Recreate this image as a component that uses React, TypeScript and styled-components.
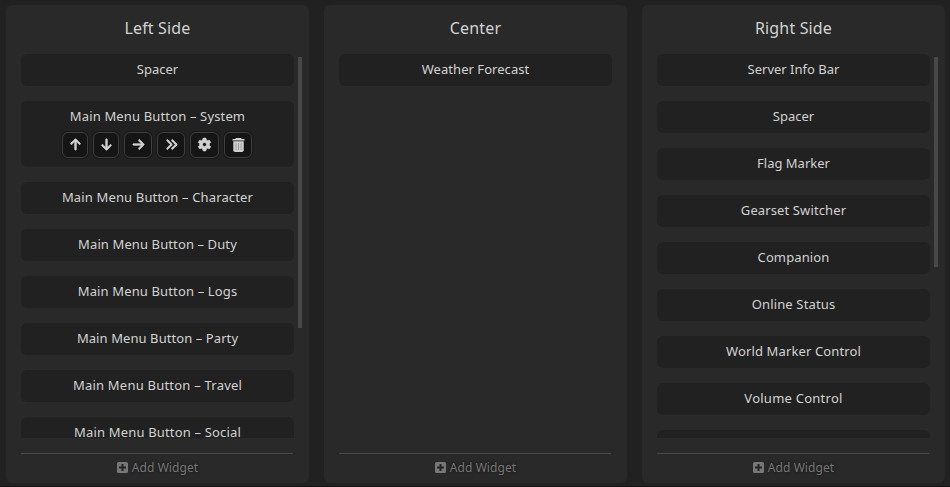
import React from "react";
import styled, { createGlobalStyle } from "styled-components";
import { FaArrowUp, FaArrowDown, FaArrowRight, FaAnglesRight, FaGear } from "react-icons/fa6";

const GlobalStyle = createGlobalStyle`
  * { box-sizing: border-box; }
  body {
    margin: 0;
    background: #212121;
    color: #d2d2d2;
    font-family: "Noto Sans", "Open Sans", sans-serif;
    overflow: hidden;
  }
`;

const Board = styled.main`
  display: grid;
  grid-template-columns: repeat(3, 303px);
  column-gap: 15px;
  height: 487px;
  padding: 5px 5px 3px 6px;
  border-bottom: 1px solid #151515;
`;

const Panel = styled.section`
  display: flex;
  flex-direction: column;
  height: 478px;
  padding: 0 0 0 15px;
  border-radius: 6px;
  background: #292929;
`;

const Title = styled.h2`
  margin: 0 15px 0 0;
  height: 49px;
  line-height: 46px;
  font-size: 16px;
  font-weight: 400;
  text-align: center;
  letter-spacing: 0.15px;
`;

const ListArea = styled.div`
  display: flex;
  height: 384px;
  overflow: hidden;
`;

const List = styled.div`
  display: flex;
  flex-direction: column;
  gap: 15px;
  width: 273px;
`;

const Scrollbar = styled.div<{ $length: number }>`
  width: 4px;
  height: ${(p) => p.$length}px;
  margin: 3px 0 0 4px;
  background: #484848;
`;

const Card = styled.div<{ $open?: boolean }>`
  flex: none;
  height: ${(p) => (p.$open ? 66 : 32)}px;
  border-radius: 6px;
  background: #212121;
`;

const Label = styled.div<{ $spacing?: number }>`
  height: 31px;
  line-height: 31px;
  font-size: 13px;
  text-align: center;
  white-space: nowrap;
  letter-spacing: ${(p) => p.$spacing ?? 0}px;
`;

const Actions = styled.div`
  display: flex;
  justify-content: center;
  gap: 5px;
  padding-right: 1px;
`;

const ActionButton = styled.button<{ $width: number }>`
  display: flex;
  align-items: center;
  justify-content: center;
  width: ${(p) => p.$width}px;
  height: 26px;
  padding: 0 0 1px;
  border: 1px solid #3f3f3f;
  border-radius: 6px;
  background: #151515;
  box-shadow: 0 0 0 1px #191919;
  color: #d2d2d2;
  font-size: 13px;

  svg {
    flex: none;
    overflow: visible;
    stroke: currentColor;
    stroke-width: 26;
  }
`;

const Footer = styled.footer`
  display: flex;
  align-items: center;
  justify-content: center;
  gap: 4px;
  width: 272px;
  height: 28px;
  margin-top: 15px;
  padding-left: 1px;
  border-top: 1px solid #484848;
  color: #777777;
  font-size: 12px;
  letter-spacing: 0.08px;
  text-shadow: 0 0 3px #111;
`;

const TrashIcon = () => (
  <svg width="13" height="14" viewBox="0 0 13 14">
    <g stroke="none">
      <path d="M4 0h5l.7 1H12.5v1.5h-12V1H3.3z" fill="#d2d2d2" />
      <path d="M1.3 3.3h10.4V12.3Q11.7 14 10 14H3Q1.3 14 1.3 12.3z" fill="#cfcfcf" />
      <path d="M4 5.2v7M6.5 5.2v7M9 5.2v7" stroke="#a0a0a0" strokeWidth="1" />
    </g>
  </svg>
);

const PlusIcon = () => (
  <svg width="11" height="11" viewBox="0 0 11 11">
    <rect width="11" height="11" rx="1.5" fill="#777777" />
    <path d="M5.5 2v7M2 5.5h7" stroke="#242424" strokeWidth="2" />
  </svg>
);

type Item = { name: string; spacing?: number; open?: boolean };
type Column = { title: string; scroll?: number; items: Item[] };

const columns: Column[] = [
  {
    title: "Left Side",
    scroll: 271,
    items: [
      { name: "Spacer" },
      { name: "Main Menu Button – System", spacing: 0.15, open: true },
      { name: "Main Menu Button – Character", spacing: 0.15 },
      { name: "Main Menu Button – Duty", spacing: 0.11 },
      { name: "Main Menu Button – Logs", spacing: 0.14 },
      { name: "Main Menu Button – Party", spacing: 0.08 },
      { name: "Main Menu Button – Travel", spacing: 0.22 },
      { name: "Main Menu Button – Social", spacing: 0.17 },
    ],
  },
  { title: "Center", items: [{ name: "Weather Forecast", spacing: 0.05 }] },
  {
    title: "Right Side",
    scroll: 210,
    items: [
      { name: "Server Info Bar" },
      { name: "Spacer" },
      { name: "Flag Marker" },
      { name: "Gearset Switcher", spacing: 0.12 },
      { name: "Companion", spacing: 0.12 },
      { name: "Online Status", spacing: 0.15 },
      { name: "World Marker Control", spacing: 0.13 },
      { name: "Volume Control", spacing: 0.25 },
      { name: "" },
    ],
  },
];

const actions = [
  { icon: FaArrowUp, width: 26, label: "Move up" },
  { icon: FaArrowDown, width: 26, label: "Move down" },
  { icon: FaArrowRight, width: 28, label: "Move to center" },
  { icon: FaAnglesRight, width: 28, label: "Move to right" },
  { icon: FaGear, width: 29, label: "Settings" },
  { icon: TrashIcon, width: 28, label: "Remove" },
];

export default function App() {
  return (
    <>
      <GlobalStyle />
      <Board>
        {columns.map((column) => (
          <Panel key={column.title}>
            <Title>{column.title}</Title>
            <ListArea>
              <List>
                {column.items.map((item) => (
                  <Card key={item.name} $open={item.open}>
                    <Label $spacing={item.spacing}>{item.name}</Label>
                    {item.open && (
                      <Actions>
                        {actions.map(({ icon: Icon, width, label }) => (
                          <ActionButton key={label} $width={width} aria-label={label}>
                            <Icon />
                          </ActionButton>
                        ))}
                      </Actions>
                    )}
                  </Card>
                ))}
              </List>
              {column.scroll && <Scrollbar $length={column.scroll} />}
            </ListArea>
            <Footer>
              <PlusIcon />
              Add Widget
            </Footer>
          </Panel>
        ))}
      </Board>
    </>
  );
}
